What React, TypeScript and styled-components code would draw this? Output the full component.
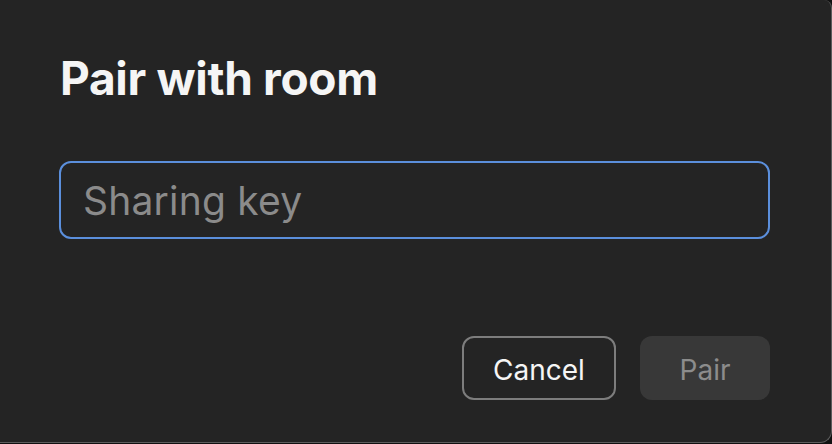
import { useState } from 'react'
import styled, { createGlobalStyle } from 'styled-components'

const GlobalStyle = createGlobalStyle`
  html, body {
    margin: 0;
    padding: 0;
    background: #111;
    font-family: Inter, "Noto Sans", "Liberation Sans", sans-serif;
  }
`

const Dialog = styled.div`
  box-sizing: border-box;
  width: 832px;
  height: 443px;
  background: #242424;
  border-right: 1px solid #5c5c5c;
  border-bottom: 1px solid #5c5c5c;
  border-radius: 0 8px 12px 0;
  padding: 53px 61px 0 59px;
  display: flex;
  flex-direction: column;
`

const Title = styled.h1`
  margin: 0 0 0 1px;
  font-size: 46px;
  line-height: 50px;
  font-weight: 700;
  color: #f5f5f5;
  letter-spacing: -0.3px;
`

const KeyInput = styled.input`
  box-sizing: border-box;
  margin-top: 58px;
  width: 100%;
  height: 78px;
  padding: 0 22px;
  background: transparent;
  border: 2px solid #5b8fdc;
  border-radius: 12px;
  outline: none;
  font-family: inherit;
  font-size: 39px;
  letter-spacing: 0.2px;
  color: #f0f0f0;

  &::placeholder {
    color: #8b8b8b;
  }
`

const Footer = styled.div`
  margin-top: 97px;
  display: flex;
  justify-content: flex-end;
  gap: 24px;
`

const Button = styled.button<{ $primary?: boolean }>`
  box-sizing: border-box;
  height: 64px;
  padding: 4px 0 0;
  width: ${(p) => (p.$primary ? '130px' : '154px')};
  border-radius: 12px;
  font-family: inherit;
  font-size: 28px;
  font-weight: 400;
  cursor: pointer;
  background: ${(p) => (p.$primary ? '#383838' : 'transparent')};
  border: ${(p) => (p.$primary ? 'none' : '2px solid #7d7d7d')};
  color: ${(p) => (p.$primary ? '#8c8c8c' : '#f5f5f5')};

  &:disabled {
    cursor: default;
  }
`

export default function App() {
  const [key, setKey] = useState('')

  return (
    <>
      <GlobalStyle />
      <Dialog>
        <Title>Pair with room</Title>
        <KeyInput
          value={key}
          onChange={(e) => setKey(e.target.value)}
          placeholder="Sharing key"
        />
        <Footer>
          <Button>Cancel</Button>
          <Button $primary disabled={!key.trim()}>Pair</Button>
        </Footer>
      </Dialog>
    </>
  )
}
